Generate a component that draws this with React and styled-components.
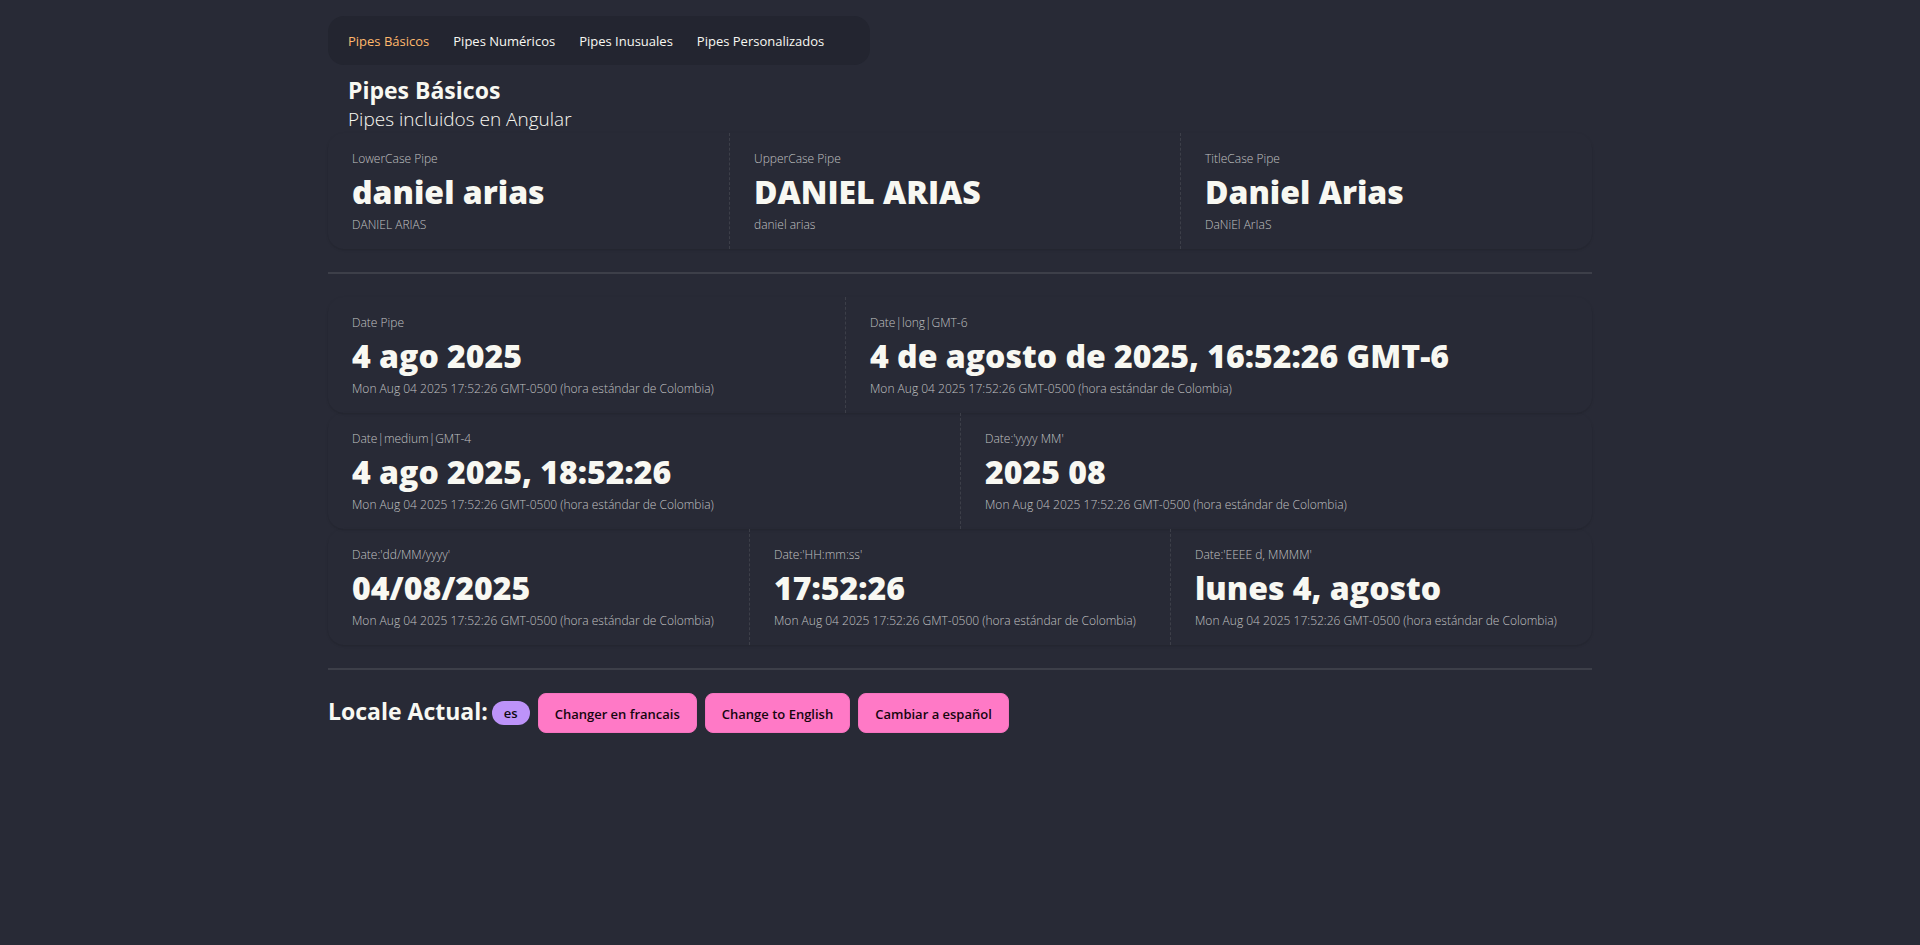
import React, { useState } from "react";
import styled, { createGlobalStyle } from "styled-components";

const GlobalStyle = createGlobalStyle`
  *, *::before, *::after {
    box-sizing: border-box;
  }

  body {
    margin: 0;
    background: #282a36;
    color: #f8f8f2;
    font-family: "Open Sans", "Noto Sans", sans-serif;
    font-size: 16px;
    line-height: 24px;
  }

  h1, h2, p, dl, dt, dd, ul {
    margin: 0;
    padding: 0;
  }
`;

const Page = styled.div`
  width: 100%;
  max-width: 1264px;
  margin: 0 auto;
  padding-top: 16px;
`;

const NavBar = styled.nav`
  width: fit-content;
  padding: 15px 22px 14px 20px;
  border-radius: 16px;
  background: #232530;
`;

const NavList = styled.ul`
  display: flex;
  list-style: none;
`;

const NavItem = styled.li`
  margin-right: 24px;
  font-size: 13px;
  line-height: 20px;
`;

const NavLink = styled.a`
  color: ${({ $active }) => ($active ? "#ffb86c" : "#f8f8f2")};
  text-decoration: none;
`;

const Heading = styled.header`
  padding: 9px 20px 0;
`;

const Title = styled.h1`
  font-size: 23px;
  font-weight: 700;
  line-height: 32px;
`;

const Subtitle = styled.p`
  font-size: 19px;
  font-weight: 300;
  line-height: 27px;
`;

const StatRow = styled.dl`
  display: grid;
  grid-template-columns: ${({ $columns }) => $columns};
  border-radius: 16px;
  box-shadow: 0 1px 3px rgba(0, 0, 0, 0.1), 0 1px 2px -1px rgba(0, 0, 0, 0.1);
`;

const Stat = styled.div`
  min-width: 0;
  padding: 17px 24px 15px;
  white-space: nowrap;

  &:not(:last-child) {
    border-right: 1px dashed #3d3f49;
  }
`;

const StatTitle = styled.dt`
  color: #c0c1c2;
  font-size: 12px;
  font-weight: 300;
  line-height: 18px;
`;

const StatValue = styled.dd`
  font-size: 32px;
  font-weight: 800;
  line-height: 48px;
`;

const StatDescription = styled.dd`
  color: #c0c1c2;
  font-size: 12px;
  font-weight: 300;
  line-height: 18px;
`;

const Divider = styled.hr`
  height: 2px;
  margin: 23px 0;
  border: 0;
  background: #3d3f49;
`;

const LocaleBar = styled.section`
  display: flex;
  align-items: center;
  gap: 8px;
`;

const LocaleTitle = styled.h2`
  display: flex;
  align-items: center;
  gap: 4px;
  font-size: 23px;
  font-weight: 700;
  line-height: 32px;
`;

const LocaleLabel = styled.span`
  padding-bottom: 4px;
`;

const Badge = styled.span`
  height: 24px;
  padding: 0 12px;
  border-radius: 12px;
  background: #bd93f9;
  color: #0d080f;
  font-size: 13px;
  font-weight: 600;
  line-height: 24px;
`;

const LocaleButton = styled.button`
  height: 40px;
  padding: 2px 16px 0;
  border: 1px solid #f573bf;
  border-radius: 8px;
  background: #ff79c6;
  color: #16050e;
  font-family: inherit;
  font-size: 13px;
  font-weight: 600;
  line-height: 20px;
  cursor: pointer;
`;

const links = ["Pipes Básicos", "Pipes Numéricos", "Pipes Inusuales", "Pipes Personalizados"];

const date = "Mon Aug 04 2025 17:52:26 GMT-0500 (hora estándar de Colombia)";

const textStats = {
  columns: "402fr 451fr 411fr",
  items: [
    ["LowerCase Pipe", "daniel arias", "DANIEL ARIAS"],
    ["UpperCase Pipe", "DANIEL ARIAS", "daniel arias"],
    ["TitleCase Pipe", "Daniel Arias", "DaNiEl ArIaS"],
  ],
};

const dateStats = [
  {
    columns: "518fr 746fr",
    items: [
      ["Date Pipe", "4 ago 2025", date],
      ["Date|long|GMT-6", "4 de agosto de 2025, 16:52:26 GMT-6", date],
    ],
  },
  {
    columns: "633fr 631fr",
    items: [
      ["Date|medium|GMT-4", "4 ago 2025, 18:52:26", date],
      ["Date:'yyyy MM'", "2025 08", date],
    ],
  },
  {
    columns: "422fr 421fr 421fr",
    items: [
      ["Date:'dd/MM/yyyy'", "04/08/2025", date],
      ["Date:'HH:mm:ss'", "17:52:26", date],
      ["Date:'EEEE d, MMMM'", "lunes 4, agosto", date],
    ],
  },
];

const locales = [
  ["fr", "Changer en francais"],
  ["en", "Change to English"],
  ["es", "Cambiar a español"],
];

function Stats({ columns, items }) {
  return (
    <StatRow $columns={columns}>
      {items.map(([title, value, description]) => (
        <Stat key={title}>
          <StatTitle>{title}</StatTitle>
          <StatValue>{value}</StatValue>
          <StatDescription>{description}</StatDescription>
        </Stat>
      ))}
    </StatRow>
  );
}

export default function App() {
  const [locale, setLocale] = useState("es");

  return (
    <Page>
      <GlobalStyle />
      <NavBar>
        <NavList>
          {links.map((label, index) => (
            <NavItem key={label}>
              <NavLink href="#" $active={index === 0}>{label}</NavLink>
            </NavItem>
          ))}
        </NavList>
      </NavBar>
      <main>
        <Heading>
          <Title>Pipes Básicos</Title>
          <Subtitle>Pipes incluidos en Angular</Subtitle>
        </Heading>
        <Stats {...textStats} />
        <Divider />
        {dateStats.map((row) => (
          <Stats key={row.columns} {...row} />
        ))}
        <Divider />
        <LocaleBar>
          <LocaleTitle>
            <LocaleLabel>Locale Actual:</LocaleLabel>
            <Badge>{locale}</Badge>
          </LocaleTitle>
          {locales.map(([code, label]) => (
            <LocaleButton key={code} type="button" onClick={() => setLocale(code)}>
              {label}
            </LocaleButton>
          ))}
        </LocaleBar>
      </main>
    </Page>
  );
}
